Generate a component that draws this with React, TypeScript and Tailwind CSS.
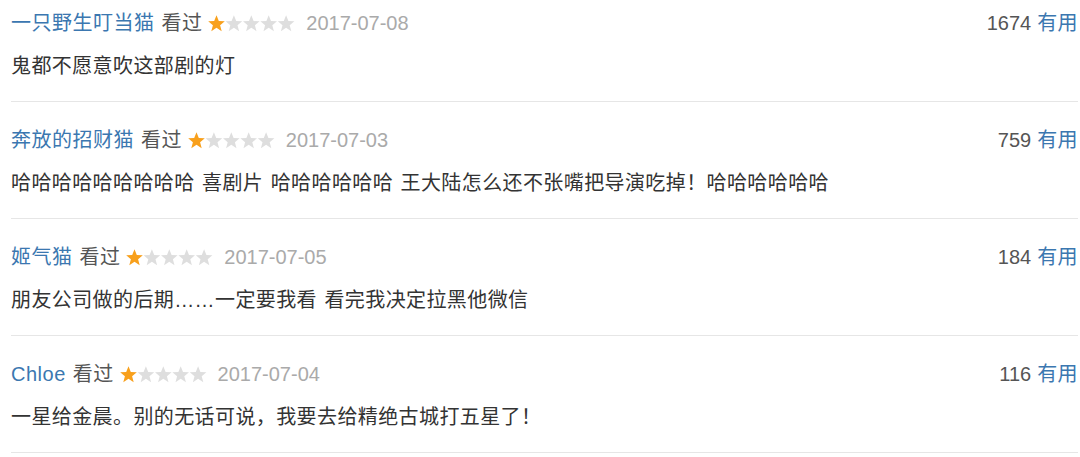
const comments = [
  { user: '一只野生叮当猫', date: '2017-07-08', votes: 1674, text: '鬼都不愿意吹这部剧的灯' },
  { user: '奔放的招财猫', date: '2017-07-03', votes: 759, text: '哈哈哈哈哈哈哈哈哈 喜剧片 哈哈哈哈哈哈 王大陆怎么还不张嘴把导演吃掉！哈哈哈哈哈哈' },
  { user: '姬气猫', date: '2017-07-05', votes: 184, text: '朋友公司做的后期……一定要我看 看完我决定拉黑他微信' },
  { user: 'Chloe', date: '2017-07-04', votes: 116, text: '一星给金晨。别的无话可说，我要去给精绝古城打五星了！' },
];

const STAR = '8.5,0.3 10.8,6.1 16.8,6.3 12.1,10.2 13.7,16.2 8.5,12.8 3.3,16.2 4.9,10.2 0.2,6.3 6.2,6.1';

function Stars({ rating }: { rating: number }) {
  return (
    <svg width="87" height="17" viewBox="0 0 87 17" className="ml-[6px] shrink-0">
      {[0, 1, 2, 3, 4].map((i) => (
        <polygon
          key={i}
          points={STAR}
          transform={`translate(${i * 17.4} 0)`}
          fill={i < rating ? '#f8a01c' : '#dedede'}
        />
      ))}
    </svg>
  );
}

export default function App() {
  return (
    <div className="w-[1080px] h-[457px] overflow-hidden bg-white pl-[11px] pr-[2px] font-['Liberation_Sans','Noto_Sans_CJK_SC',sans-serif] text-[20px]">
      {comments.map((c, index) => (
        <div key={index} className={`${index === 0 ? 'pt-[10px]' : 'pt-[25px]'} pb-[22px] border-b border-[#e6e6e6]`}>
          <div className="flex items-center justify-between h-[26px] leading-[26px]">
            <div className="flex items-center">
              <span className="text-[#3b77b0] tracking-[0.5px]">{c.user}</span>
              <span className="ml-[7px] text-[#555] tracking-[0.4px]">看过</span>
              <Stars rating={1} />
              <span className="ml-[11px] text-[#aaa]">{c.date}</span>
            </div>
            <div className="flex items-center">
              <span className="text-[#555]">{c.votes}</span>
              <span className="ml-[6px] text-[#3b77b0] tracking-[0.4px]">有用</span>
            </div>
          </div>
          <p className="mt-[17px] leading-[26px] text-[#333] tracking-[0.4px] [word-spacing:1.5px]">{c.text}</p>
        </div>
      ))}
    </div>
  );
}
